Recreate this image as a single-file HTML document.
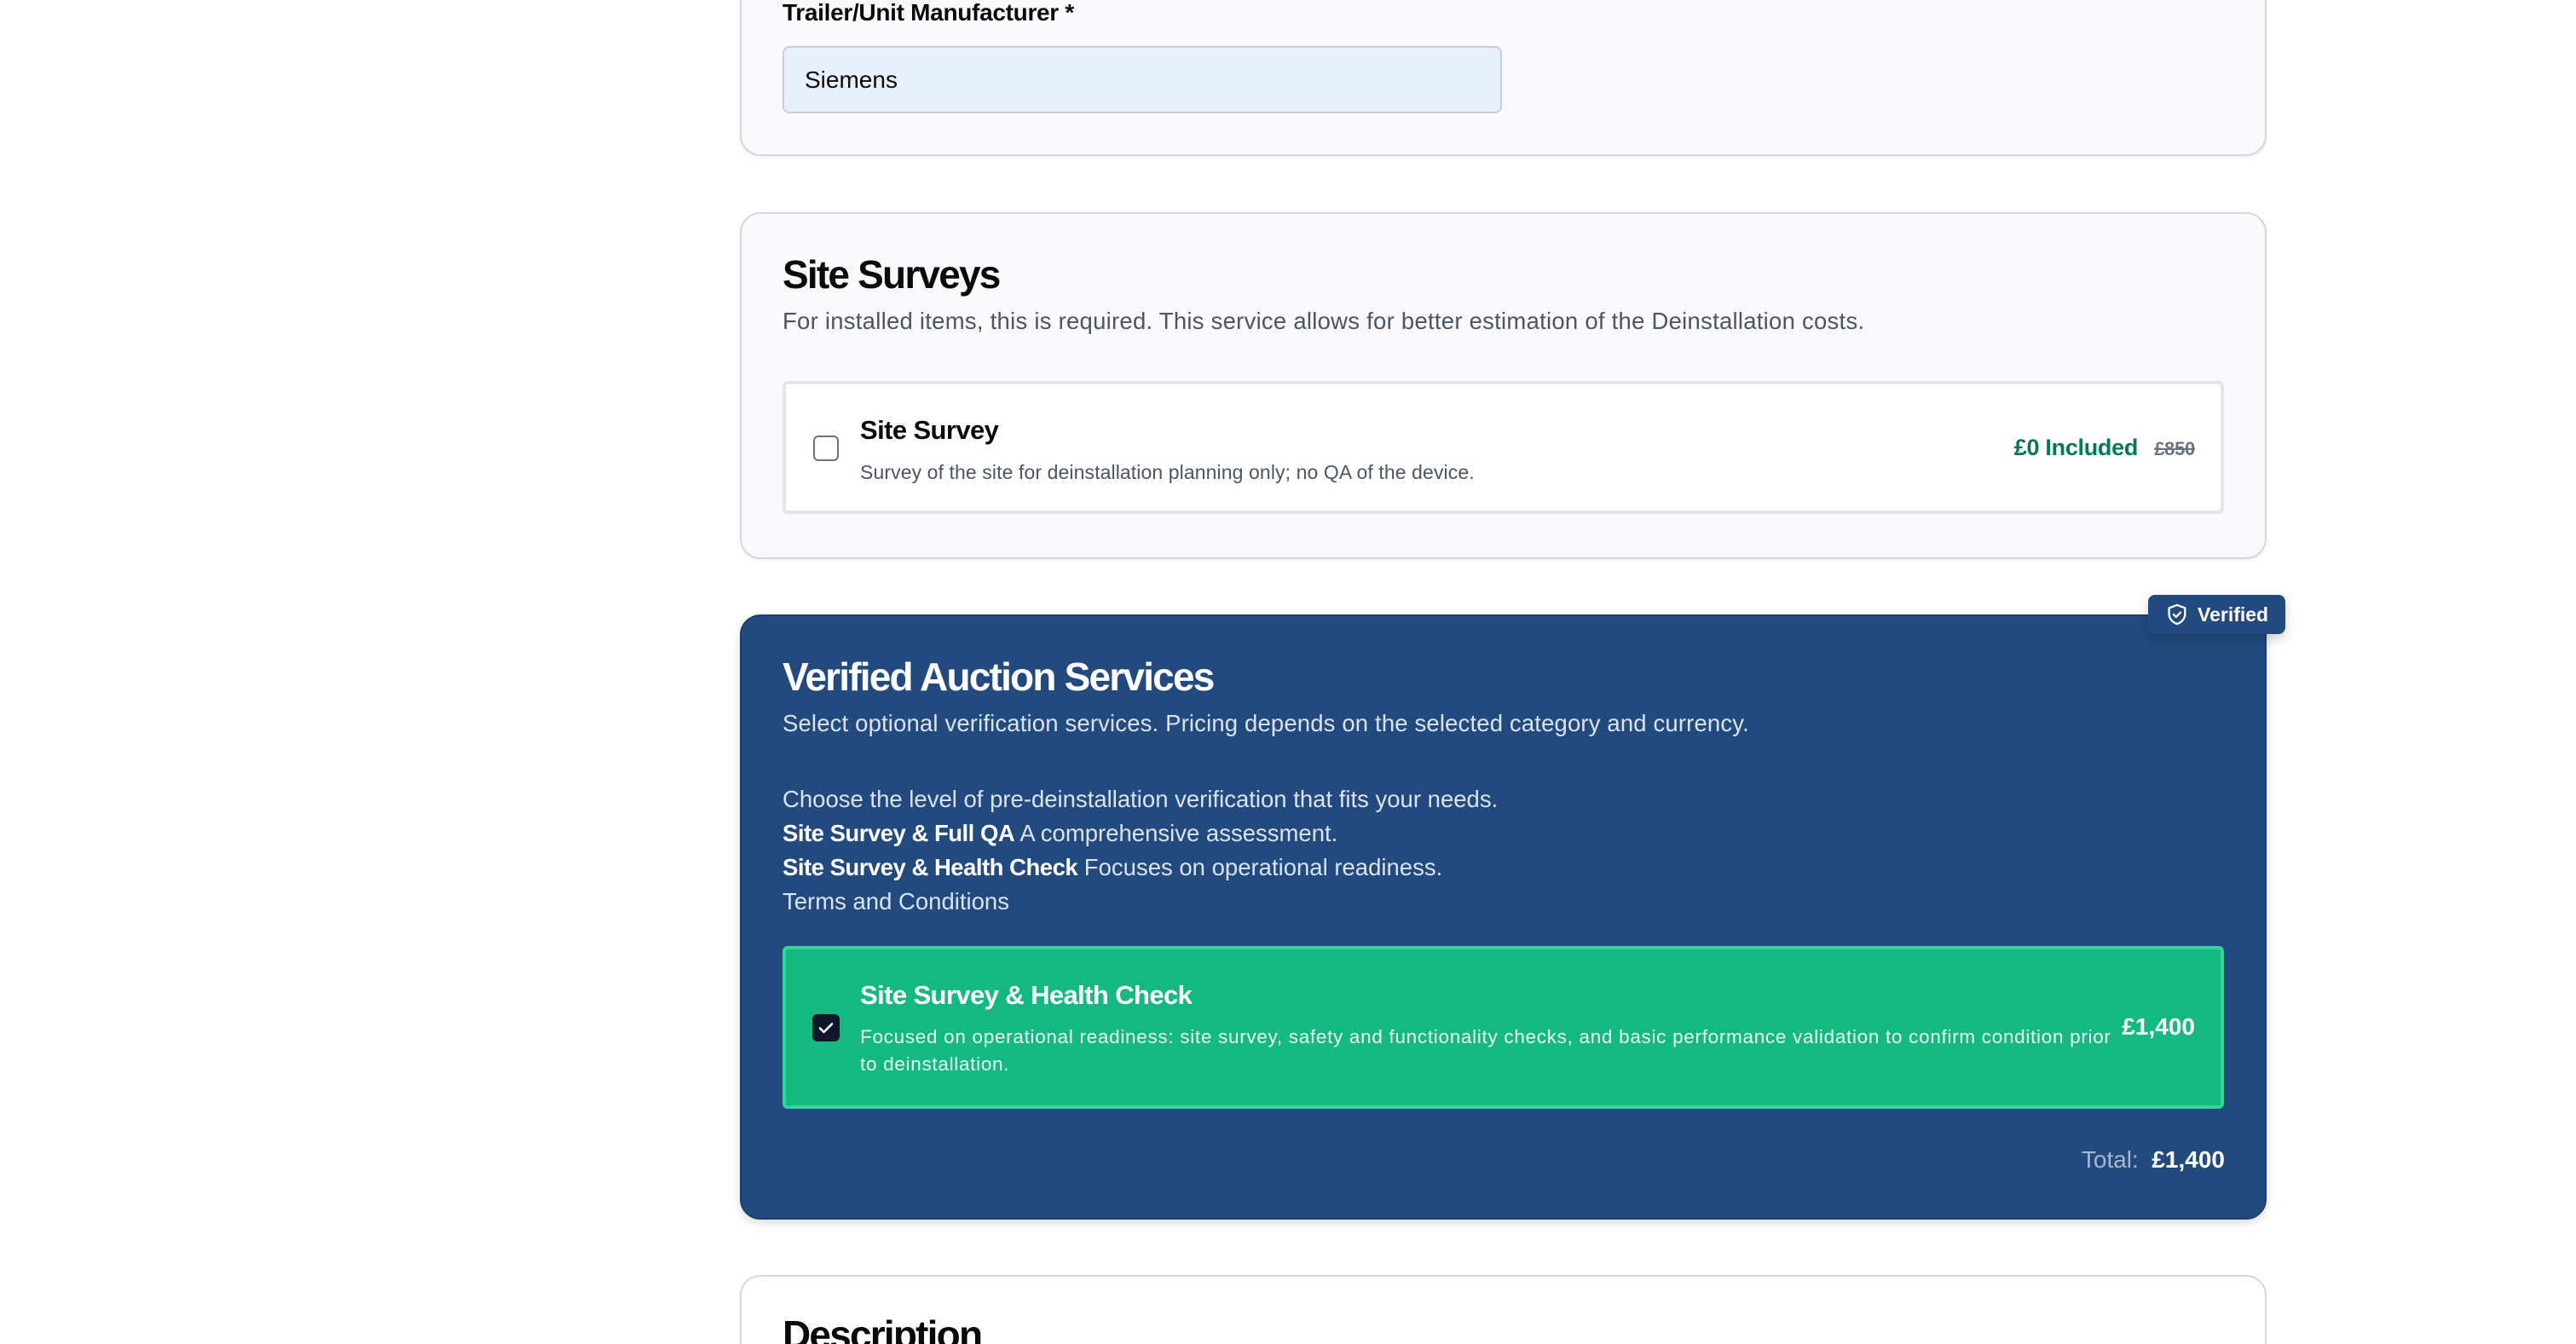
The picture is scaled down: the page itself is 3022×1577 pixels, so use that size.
<!DOCTYPE html>
<html><head><meta charset="utf-8"><style>
*{box-sizing:border-box;margin:0;padding:0}
html,body{width:3022px;height:1577px;overflow:hidden}
body{background:#fff;font-family:"Liberation Sans",Arial,sans-serif;position:relative;color:#0a0a0a}
.card{position:absolute;left:868px;width:1791px;border:2px solid #d6d6dc;border-radius:24px;background:#fafafc;box-shadow:0 2px 4px rgba(0,0,0,.06)}
.abs{position:absolute;white-space:nowrap}
</style></head><body>
<div class="card" style="top:-40px;height:223px"></div>
<div class="abs" style="left:918px;top:-2px;font-size:28px;font-weight:bold;line-height:34px;letter-spacing:-.3px">Trailer/Unit Manufacturer *</div>
<div class="abs" style="left:918px;top:54px;width:844px;height:79px;background:#e8f0fe;border:2px solid #c9ced6;border-radius:8px;font-size:28px;line-height:75px;padding-left:24px">Siemens</div>

<div class="card" style="top:249px;height:407px"></div>
<div class="abs" style="left:918px;top:294px;font-size:46px;font-weight:bold;letter-spacing:-1.8px;line-height:56px">Site Surveys</div>
<div class="abs" style="left:918px;top:360px;font-size:27.5px;color:#4b5563;line-height:34px;letter-spacing:.25px">For installed items, this is required. This service allows for better estimation of the Deinstallation costs.</div>
<div class="abs" style="left:918px;top:447px;width:1691px;height:156px;background:#fff;border:4px solid #e4e4e9;border-radius:6px"></div>
<div class="abs" style="left:954px;top:511px;width:30px;height:30px;border:2px solid #6b7280;border-radius:6px;background:#fff"></div>
<div class="abs" style="left:1009px;top:487px;font-size:31px;font-weight:bold;line-height:36px;letter-spacing:-.6px">Site Survey</div>
<div class="abs" style="left:1009px;top:540px;font-size:23px;color:#4b5563;line-height:28px;letter-spacing:.1px">Survey of the site for deinstallation planning only; no QA of the device.</div>
<div class="abs" style="right:447px;top:508px;font-size:27px;font-weight:bold;color:#047857;line-height:34px;letter-spacing:-.3px">£0 Included <span style="font-size:22px;color:#6b7280;text-decoration:line-through;margin-left:12px">£850</span></div>

<div class="card" style="top:721px;height:710px;background:#224a7e;border-color:#1d3f6c;box-shadow:0 4px 10px rgba(0,0,0,.15)"></div>
<div class="abs" style="left:2520px;top:698px;width:161px;height:46px;background:#224a7e;border-radius:8px;box-shadow:0 6px 14px rgba(0,0,0,.18);color:#fff;font-size:23px;font-weight:bold;line-height:46px;padding-left:58px">Verified</div>
<svg class="abs" style="left:2540px;top:707px" width="28" height="28" viewBox="0 0 24 24" fill="none" stroke="#fff" stroke-width="2" stroke-linecap="round" stroke-linejoin="round"><path d="M12 2.5l8 3v6c0 5-3.5 8.5-8 10-4.5-1.5-8-5-8-10v-6z"/><path d="M8.5 12l2.5 2.5 4.5-4.5"/></svg>
<div class="abs" style="left:918px;top:766px;font-size:46px;font-weight:bold;color:#fff;letter-spacing:-1.8px;line-height:56px">Verified Auction Services</div>
<div class="abs" style="left:918px;top:832px;font-size:27.5px;color:#dbe3ee;line-height:34px;letter-spacing:.15px">Select optional verification services. Pricing depends on the selected category and currency.</div>
<div class="abs" style="left:918px;top:918px;font-size:27.5px;color:#dbe3ee;line-height:40px">Choose the level of pre-deinstallation verification that fits your needs.<br><b style="color:#fff;letter-spacing:-.5px">Site Survey &amp; Full QA</b> A comprehensive assessment.<br><b style="color:#fff;letter-spacing:-.5px">Site Survey &amp; Health Check</b> Focuses on operational readiness.<br>Terms and Conditions</div>
<div class="abs" style="left:918px;top:1110px;width:1691px;height:191px;background:#14b981;border:4px solid #34d399;border-radius:6px"></div>
<div class="abs" style="left:953px;top:1190px;width:32px;height:32px;background:#0f172a;border-radius:6px"></div>
<svg class="abs" style="left:957px;top:1194px" width="24" height="24" viewBox="0 0 24 24" fill="none" stroke="#fff" stroke-width="2.6" stroke-linecap="round" stroke-linejoin="round"><path d="M5 12.5l4.5 4.5L19 7.5"/></svg>
<div class="abs" style="left:1009px;top:1150px;font-size:31px;font-weight:bold;color:#fff;line-height:36px;letter-spacing:-.6px">Site Survey &amp; Health Check</div>
<div class="abs" style="left:1009px;top:1201px;width:1478px;white-space:normal;font-size:22.5px;color:#e6fbf2;line-height:32px;letter-spacing:.7px">Focused on operational readiness: site survey, safety and functionality checks, and basic performance validation to confirm condition prior to deinstallation.</div>
<div class="abs" style="right:447px;top:1188px;font-size:28px;font-weight:bold;color:#fff;line-height:34px">£1,400</div>
<div class="abs" style="right:412px;top:1344px;font-size:28px;color:#a9b8cc;line-height:34px">Total:&nbsp; <b style="color:#fff">£1,400</b></div>

<div class="card" style="top:1496px;height:120px;background:#fff"></div>
<div class="abs" style="left:918px;top:1538px;font-size:46px;font-weight:bold;letter-spacing:-1.8px;line-height:56px">Description</div>
</body></html>
